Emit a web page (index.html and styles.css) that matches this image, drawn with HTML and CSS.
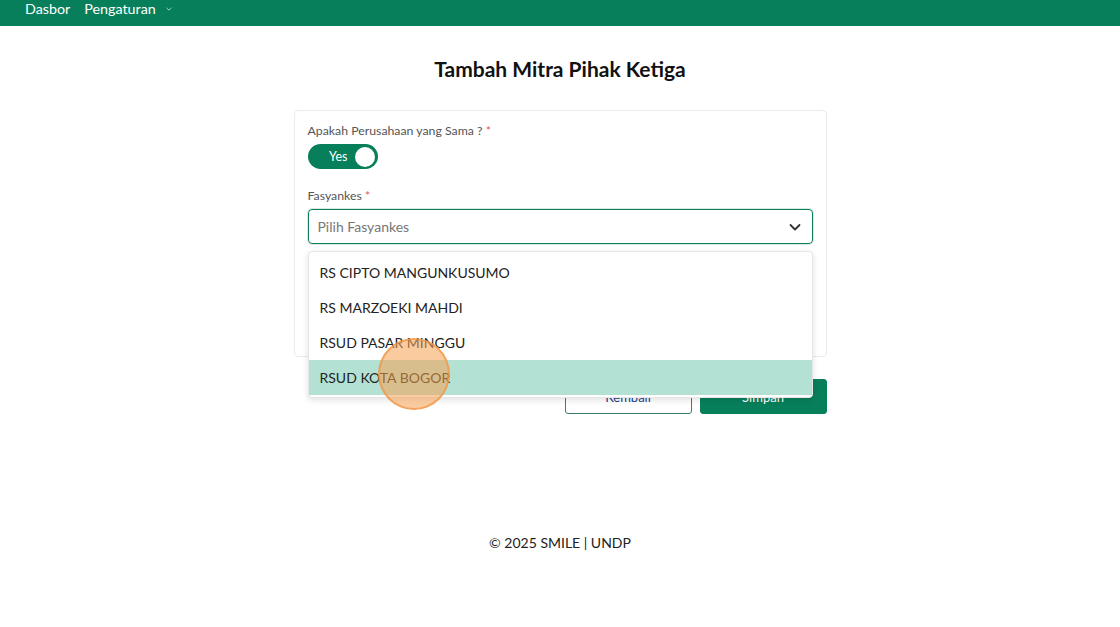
FILE: index.html
```html
<!DOCTYPE html>
<html>
<head>
  <title>Tambah Mitra Pihak Ketiga</title>
  <link rel="stylesheet" href="styles.css">
</head>
<body>
  <div class="navbar">
    <a class="nav-link">Dasbor</a>
    <a class="nav-link">Pengaturan
      <svg class="nav-caret" width="8" height="8" viewBox="0 0 8 8"><path d="M1.5 2.8 L4 5.2 L6.5 2.8" fill="none" stroke="#9fd3bf" stroke-width="1"/></svg>
    </a>
  </div>

  <div class="page">
    <h1 class="page-title">Tambah Mitra Pihak Ketiga</h1>

    <div class="form-wrap">
      <div class="card">
        <div class="field">
          <label class="field-label">Apakah Perusahaan yang Sama ? <span class="req">*</span></label>
          <div class="toggle">
            <span class="toggle-text">Yes</span>
            <span class="toggle-knob"></span>
          </div>
        </div>

        <div class="field">
          <label class="field-label">Fasyankes <span class="req">*</span></label>
          <div class="select">
            <span class="select-placeholder">Pilih Fasyankes</span>
            <svg width="14" height="14" viewBox="0 0 14 14"><path d="M2.5 5 L7 9.5 L11.5 5" fill="none" stroke="#333" stroke-width="1.8" stroke-linecap="round" stroke-linejoin="round"/></svg>
          </div>
          <div class="dropdown">
            <div class="option">RS CIPTO MANGUNKUSUMO</div>
            <div class="option">RS MARZOEKI MAHDI</div>
            <div class="option">RSUD PASAR MINGGU</div>
            <div class="option active">RSUD KOTA BOGOR</div>
          </div>
        </div>
      </div>

      <div class="actions">
        <button class="btn btn-outline">Kembali</button>
        <button class="btn btn-primary">Simpan</button>
      </div>

      <span class="cursor-dot"></span>
    </div>
  </div>

  <footer class="footer">© 2025 SMILE | UNDP</footer>
</body>
</html>
```

FILE: styles.css
```css
body {
  margin: 0;
  font-family: Lato, "Noto Sans", sans-serif;
  color: #222;
  background: #fff;
}
.navbar {
  height: 26px;
  background-color: #077f5a;
  display: flex;
  align-items: flex-start;
  padding-left: 25px;
  gap: 14px;
}
.nav-link {
  color: #fff;
  font-size: 14.3px;
  line-height: 18px;
  display: flex;
  align-items: center;
}
.nav-caret {
  margin-left: 9px;
}
.page {
  display: flex;
  flex-direction: column;
  align-items: center;
}
.page-title {
  font-size: 21px;
  font-weight: 700;
  color: #111;
  margin: 30px 0 28px;
  line-height: 26px;
}
.form-wrap {
  width: 533px;
  position: relative;
}
.card {
  border: 1px solid #e9ecef;
  border-radius: 4px;
  padding: 12px 13px 0;
  height: 233px;
}
.field {
  position: relative;
  margin-bottom: 19px;
}
.field-label {
  display: block;
  font-size: 12.3px;
  color: #555;
  line-height: 16px;
  margin-bottom: 5px;
}
.req {
  color: #e05b5b;
}
.toggle {
  width: 70px;
  height: 25px;
  border-radius: 13px;
  background: #077f5a;
  display: flex;
  align-items: center;
  justify-content: flex-end;
  box-sizing: border-box;
  padding-right: 3px;
}
.toggle-text {
  color: #fff;
  font-size: 12.5px;
  margin-right: 7px;
}
.toggle-knob {
  width: 20px;
  height: 20px;
  border-radius: 50%;
  background: #fff;
}
.select {
  height: 35px;
  box-sizing: border-box;
  border: 1px solid #0b7d58;
  border-radius: 4px;
  box-shadow: 0 0 0 1px rgba(11, 125, 88, 0.15);
  display: flex;
  align-items: center;
  justify-content: space-between;
  padding: 0 10px 0 9px;
}
.select-placeholder {
  font-size: 14px;
  color: #777;
}
.dropdown {
  position: absolute;
  left: 0;
  right: 0;
  top: 63px;
  background: #fff;
  border: 1px solid #e6e6e6;
  border-radius: 4px;
  box-shadow: 0 2px 6px rgba(0, 0, 0, 0.12);
  padding: 3px 0 2px;
  z-index: 5;
}
.option {
  height: 35px;
  line-height: 35px;
  padding-left: 11px;
  font-size: 14px;
  color: #222;
}
.option.active {
  background: #b3e2d4;
}
.actions {
  display: flex;
  justify-content: flex-end;
  gap: 8px;
  margin-top: 22px;
}
.btn {
  width: 127px;
  height: 35px;
  border-radius: 3px;
  font-family: Lato, "Noto Sans", sans-serif;
  font-size: 13px;
}
.btn-outline {
  background: #fff;
  border: 1px solid #3f7f6a;
  color: #1f3f8f;
}
.btn-primary {
  background: #077f5a;
  border: 1px solid #077f5a;
  color: #fff;
}
.cursor-dot {
  position: absolute;
  left: 84px;
  top: 228px;
  width: 68px;
  height: 68px;
  border-radius: 50%;
  background: rgba(245, 160, 80, 0.55);
  border: 2px solid rgba(240, 150, 70, 0.75);
  z-index: 6;
}
.footer {
  text-align: center;
  font-size: 14px;
  color: #222;
  margin-top: 120px;
}
```
